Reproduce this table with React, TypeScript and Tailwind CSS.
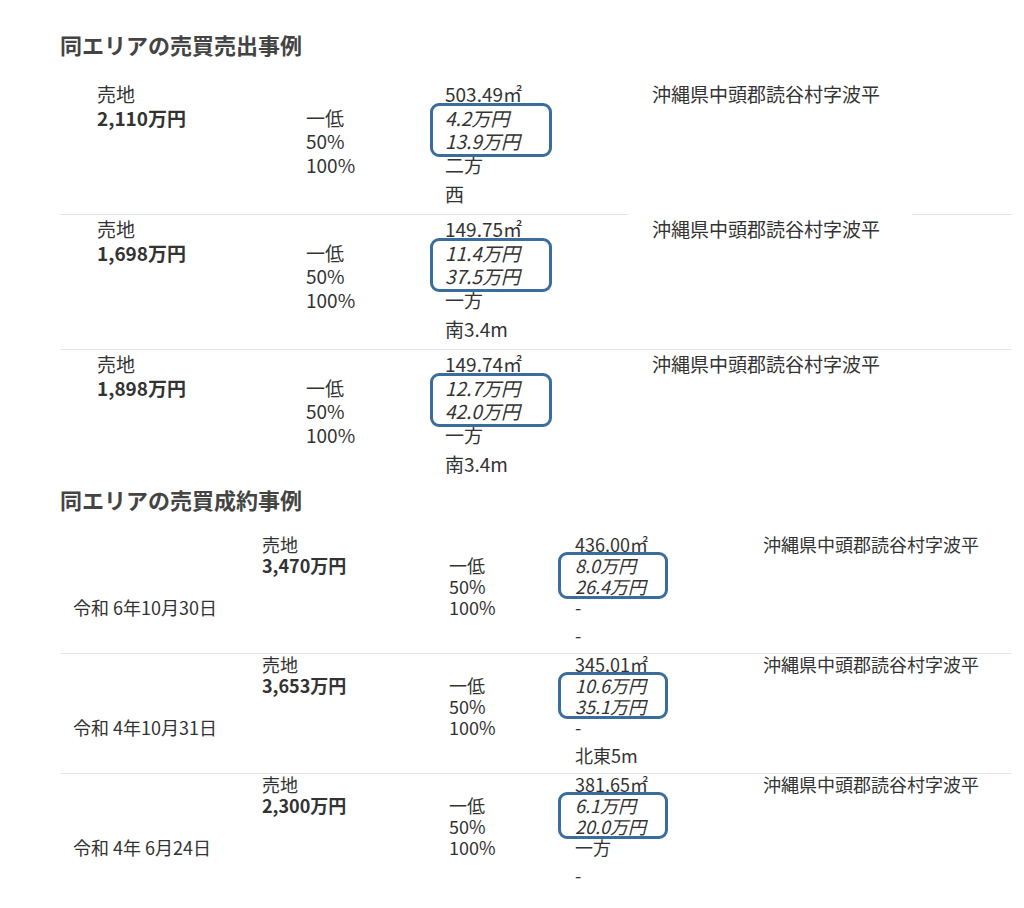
const listings = [
    { area: "503.49㎡", unit1: "4.2万円", unit2: "13.9万円", road: "二方", dir: "西", price: "2,110万円" },
    { area: "149.75㎡", unit1: "11.4万円", unit2: "37.5万円", road: "一方", dir: "南3.4m", price: "1,698万円" },
    { area: "149.74㎡", unit1: "12.7万円", unit2: "42.0万円", road: "一方", dir: "南3.4m", price: "1,898万円" },
];

const contracts = [
    { date: "令和 6年10月30日", price: "3,470万円", area: "436.00㎡", unit1: "8.0万円", unit2: "26.4万円", road: "-", dir: "-" },
    { date: "令和 4年10月31日", price: "3,653万円", area: "345.01㎡", unit1: "10.6万円", unit2: "35.1万円", road: "-", dir: "北東5m" },
    { date: "令和 4年 6月24日", price: "2,300万円", area: "381.65㎡", unit1: "6.1万円", unit2: "20.0万円", road: "一方", dir: "-" },
];

const ADDRESS = "沖縄県中頭郡読谷村字波平";

const Divider = ({ gap }: { gap?: boolean }) =>
    gap ? (
        <div className="flex justify-between">
            <div className="h-px w-[568px] bg-[#e4e4e4]" />
            <div className="h-px w-[100px] bg-[#e4e4e4]" />
        </div>
    ) : (
        <div className="h-px bg-[#e4e4e4]" />
    );

const Highlight = ({ className }: { className: string }) => (
    <div className={`absolute border-[3px] border-[#3a6d9b] rounded-[9px] ${className}`} />
);

const App = () => {
    return (
        <div className="bg-white w-[1024px] h-[908px] overflow-hidden text-[#333] font-['Noto_Sans_CJK_JP',sans-serif]">
            <div className="pl-[60px] pr-[12px] pt-[29px]">
                <h2 className="text-[22px] leading-[30px] font-bold text-[#444]">同エリアの売買売出事例</h2>

                <div className="mt-[21px]">
                    {listings.map((l, i) => (
                        <div key={i}>
                            {i > 0 && <Divider gap={i === 1} />}
                            <div className="h-[134px] pt-[2px] pl-[37px] grid grid-cols-[209px_139px_207px_1fr] text-[19px] leading-[23.5px]">
                                <div>
                                    <div>売地</div>
                                    <div className="font-bold">{l.price}</div>
                                </div>
                                <div className="pt-[23.5px]">
                                    <div>一低</div>
                                    <div>50%</div>
                                    <div>100%</div>
                                </div>
                                <div className="relative">
                                    <div>{l.area}</div>
                                    <div className="italic">{l.unit1}</div>
                                    <div className="italic">{l.unit2}</div>
                                    <div>{l.road}</div>
                                    <div className="mt-[6px]">{l.dir}</div>
                                    <Highlight className="left-[-15px] top-[21px] w-[122px] h-[54px]" />
                                </div>
                                <div>{ADDRESS}</div>
                            </div>
                        </div>
                    ))}
                </div>

                <h2 className="text-[22px] leading-[30px] font-bold text-[#444]">同エリアの売買成約事例</h2>

                <div className="mt-[20px]">
                    {contracts.map((c, i) => (
                        <div key={i}>
                            {i > 0 && <Divider />}
                            <div className="h-[119px] pl-[13px] grid grid-cols-[189px_187px_126px_188px_1fr] text-[18px] leading-[21px]">
                                <div className="pt-[63px]">{c.date}</div>
                                <div>
                                    <div>売地</div>
                                    <div className="font-bold">{c.price}</div>
                                </div>
                                <div className="pt-[21px]">
                                    <div>一低</div>
                                    <div>50%</div>
                                    <div>100%</div>
                                </div>
                                <div className="relative">
                                    <div>{c.area}</div>
                                    <div className="italic">{c.unit1}</div>
                                    <div className="italic">{c.unit2}</div>
                                    <div>{c.road}</div>
                                    <div className="mt-[7px]">{c.dir}</div>
                                    <Highlight className="left-[-17px] top-[18px] w-[110px] h-[47px]" />
                                </div>
                                <div>{ADDRESS}</div>
                            </div>
                        </div>
                    ))}
                </div>
            </div>
        </div>
    );
};

export default App;
